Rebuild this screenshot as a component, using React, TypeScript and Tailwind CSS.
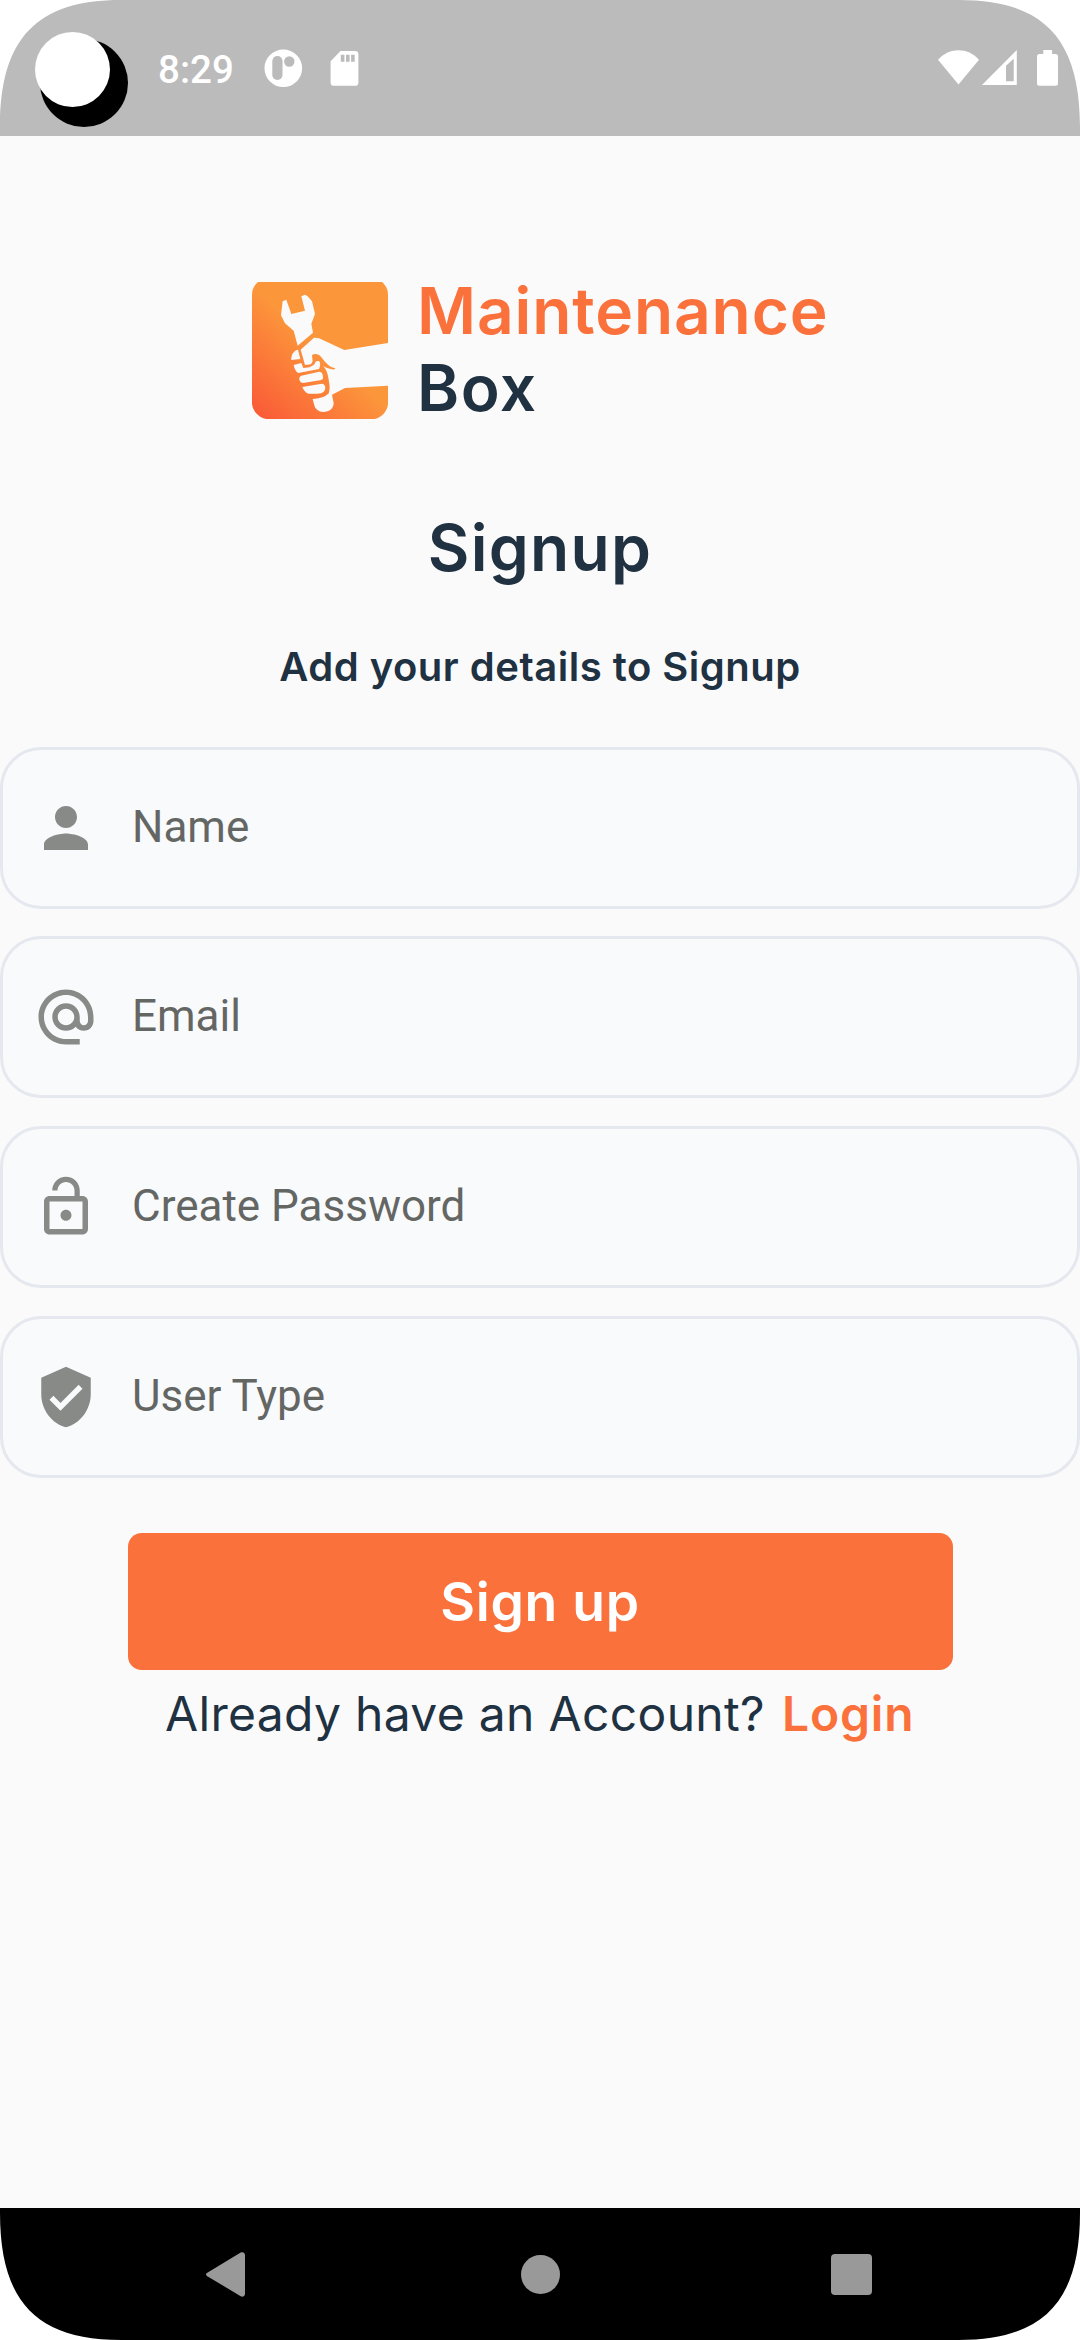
import type { IconType } from "react-icons";
import { MdAlternateEmail, MdLockOpen, MdPerson, MdVerifiedUser } from "react-icons/md";

const fields: { label: string; Icon: IconType }[] = [
  { label: "Name", Icon: MdPerson },
  { label: "Email", Icon: MdAlternateEmail },
  { label: "Create Password", Icon: MdLockOpen },
  { label: "User Type", Icon: MdVerifiedUser },
];

function StatusBar() {
  return (
    <header className="relative flex h-[136px] shrink-0 items-start bg-[#bbbbbb] pl-[158px] pr-[22px] pt-[48px] text-white">
      {/* camera cutout with touch indicator */}
      <div className="absolute left-[40px] top-[39px] size-[88px] rounded-full bg-black" />
      <div className="absolute left-[35px] top-[32px] size-[75px] rounded-full bg-white" />
      <span className="w-[106px] pt-[2px] font-['Roboto',sans-serif] text-[38.5px] font-medium leading-[40px]">8:29</span>
      <svg className="mt-[1px] h-[39px] w-[39px]" viewBox="0 0 39 39">
        <circle cx="19.3" cy="19.3" r="18.8" fill="#fff" />
        <rect x="8.3" y="7" width="10.2" height="24" rx="5.1" fill="#bbbbbb" />
        <circle cx="25.3" cy="12.5" r="5.2" fill="#bbbbbb" />
      </svg>
      <svg className="ml-[27px] mt-[3px] h-[35px] w-[29px]" viewBox="0 0 29 35">
        <path d="M10.5 0H25a3.4 3.4 0 0 1 3.4 3.4v28A3.4 3.4 0 0 1 25 34.8H4a3.4 3.4 0 0 1-3.4-3.4V10.3Z" fill="#fff" />
        <path d="M10.8 3.8h3.6v7h-3.6zM16 3.8h3.6v7H16zM21.1 3.8h3.6v7h-3.6z" fill="#bbbbbb" />
      </svg>
      <svg className="ml-auto mt-[2px] h-[35px] w-[41px]" viewBox="0 0 41 35">
        <path d="M0 9.8C5.8 3.2 13 .2 20.5.2S35.2 3.2 41 9.8L20.5 34.6Z" fill="#fff" />
      </svg>
      <svg className="ml-[3px] mt-[2px] h-[35px] w-[35px]" viewBox="0 0 35 35">
        <path fillRule="evenodd" d="M0 35 34.8 0v35ZM24 15.8v15.4h7.7V8.8Z" fill="#fff" />
      </svg>
      <svg className="ml-[20px] mt-[2px] h-[36px] w-[21px]" viewBox="0 0 21 36">
        <path d="M6.3 0h8.8v4h3.4A2.5 2.5 0 0 1 21 6.5V33.3A2.5 2.5 0 0 1 18.5 35.8h-16A2.5 2.5 0 0 1 0 33.3V6.5A2.5 2.5 0 0 1 2.5 4h3.8Z" fill="#fff" />
      </svg>
    </header>
  );
}

function Logo() {
  return (
    <svg className="mt-[10px] h-[137px] w-[136px] shrink-0" viewBox="36 36 408 411">
      <defs>
        <linearGradient id="tile" gradientUnits="userSpaceOnUse" x1="60" y1="440" x2="245" y2="235">
          <stop offset="0" stopColor="#fa5b37" />
          <stop offset="1" stopColor="#fc963b" />
        </linearGradient>
      </defs>
      <path d="M54 36H426C437 46 444 58 444 74V402C442 424 425 443 404 447H78C56 443 39 424 36 402V74C36 58 43 46 54 36Z" fill="url(#tile)" />
      <g fill="#fafafa">
        {/* wrench */}
        <path d="M128 94 139 89 154 132 195 122 184 79 195 74 203 79 216 94 225 132 214 161 219 188 173 227 161 182 135 160 123 136Z" />
        <path d="M218 387C238 386 253 382 264 372L276 374 281 400C280 417 267 426 250 426 236 426 226 418 223 406Z" />
        {/* forearm, palm and thumb */}
        <path d="M222 203 237 205 313 240 444 219V347L315 354 276 374 262 378C270 366 270 350 267 335 264 310 259 298 249 288 259 294 272 299 284 298L286 294C270 294 256 277 243 260 235 250 223 250 216 255L218 274 213 283 195 285 182 239Z" />
        {/* fingers */}
        <path d="M170 240 174 239 181 267 154 270C153 257 159 245 170 240Z" />
        <path d="M161 285 184 279 190 294 209 292 222 284 228 274 237 273C243 280 240 291 237 297L175 309C167 305 163 296 161 285Z" />
        <path d="M184 317 237 305C247 304 251 318 248 328L240 331 189 339C178 337 173 322 184 317Z" />
        <path d="M187 351 245 341C256 341 259 354 252 364 247 370 240 371 231 371L205 371C195 367 190 359 187 351Z" />
      </g>
    </svg>
  );
}

function NavBar() {
  return (
    <nav className="flex h-[132px] shrink-0 items-center justify-between bg-black pl-[206px] pr-[208px] pt-[1px]">
      <svg className="h-[45px] w-[39px]" viewBox="0 0 39 45">
        <path d="M1.3 20.8 34.7.6C36.8-.3 39 .8 39 3.2V41.8C39 44.2 36.8 45.3 34.7 44.2L1.3 24.2C-.4 23.2-.4 21.8 1.3 20.8Z" fill="#999" />
      </svg>
      <div className="ml-[4px] size-[39px] rounded-full bg-[#999]" />
      <div className="size-[41px] rounded-[4px] bg-[#999]" />
    </nav>
  );
}

/* Rounded display corners */
function Corner({ className }: { className: string }) {
  return (
    <svg className={`absolute h-[127px] w-[121px] ${className}`} viewBox="0 0 121 127">
      <path d="M0 0H121C37 0 0 38 0 127Z" fill="#fff" />
    </svg>
  );
}

export default function App() {
  return (
    <div className="relative flex h-[2340px] w-[1080px] flex-col overflow-hidden bg-[#fafafa] font-['Inter',sans-serif] text-[#203142]">
      <StatusBar />
      <main className="flex flex-1 flex-col">
        <div className="mt-[136px] flex pl-[252px]">
          <Logo />
          <div className="ml-[29px] text-[64px] font-semibold leading-[77px]">
            <div className="tracking-[0.9px] text-[#fb713c]">Maintenance</div>
            <div className="tracking-[1.5px]">Box</div>
          </div>
        </div>
        <h1 className="mt-[83px] text-center text-[64px] font-semibold leading-[78px] tracking-[1.3px]">Signup</h1>
        <p className="mt-[56px] text-center text-[40px] font-semibold leading-[48px] tracking-[0.5px]">Add your details to Signup</p>
        <form className="mt-[55.5px] flex flex-col gap-[27.7px]">
          {fields.map(({ label, Icon }) => (
            <label key={label} className="flex h-[162px] items-center gap-[33px] rounded-[41px] border-[3px] border-[#e5e8ee] bg-[#f9fafc] pl-[30px]">
              <Icon className="size-[66px] text-[#888a88]" />
              <span className="pb-[2px] font-['Roboto',sans-serif] text-[44px] leading-[52px] text-[#646664]">{label}</span>
            </label>
          ))}
        </form>
        <button className="mx-auto mt-[55px] h-[137.5px] w-[825px] rounded-[13.75px] bg-[#fb713c] pt-[2px] text-[53.5px] font-semibold tracking-[0.7px] text-white">
          Sign up
        </button>
        <div className="mt-[15px] flex pl-[165px] text-[48px] leading-[58px]">
          <span className="w-[617px] tracking-[0.32px]">Already have an Account?</span>
          <span className="font-semibold tracking-[0.8px] text-[#fb713c]">Login</span>
        </div>
      </main>
      <NavBar />
      <Corner className="left-0 top-0" />
      <Corner className="right-0 top-0 -scale-x-100" />
      <Corner className="bottom-0 left-0 -scale-y-100" />
      <Corner className="bottom-0 right-0 -scale-100" />
    </div>
  );
}
